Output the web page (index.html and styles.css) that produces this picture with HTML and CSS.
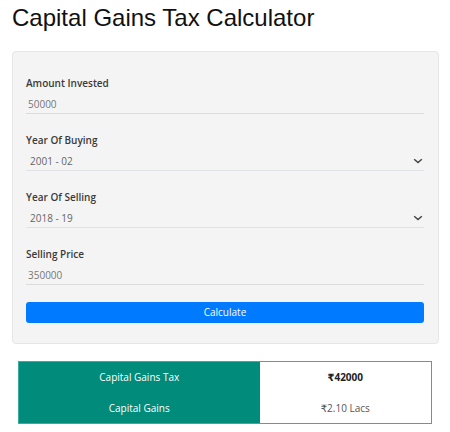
FILE: index.html
```html
<!DOCTYPE html>
<html lang="en">
<head>
<meta charset="utf-8">
<title>Capital Gains Tax Calculator</title>
<link rel="stylesheet" href="styles.css">
</head>
<body>
<h1 class="title">Capital Gains Tax Calculator</h1>
<form class="card">
  <div class="field">
    <label class="label" for="amt">Amount Invested</label>
    <input class="input" id="amt" type="text" value="50000">
  </div>
  <div class="field">
    <label class="label" for="buy">Year Of Buying</label>
    <div class="select-wrap">
      <select class="input select" id="buy"><option>2001 - 02</option></select>
      <svg class="chev" width="10" height="6" viewBox="0 0 10 6"><path d="M1.2 1.2l3.8 3.3 3.8-3.3" fill="none" stroke="#444" stroke-width="1.5"/></svg>
    </div>
  </div>
  <div class="field">
    <label class="label" for="sell">Year Of Selling</label>
    <div class="select-wrap">
      <select class="input select" id="sell"><option>2018 - 19</option></select>
      <svg class="chev" width="10" height="6" viewBox="0 0 10 6"><path d="M1.2 1.2l3.8 3.3 3.8-3.3" fill="none" stroke="#444" stroke-width="1.5"/></svg>
    </div>
  </div>
  <div class="field">
    <label class="label" for="price">Selling Price</label>
    <input class="input" id="price" type="text" value="350000">
  </div>
  <button class="btn" type="button">Calculate</button>
</form>
<table class="result">
  <tr><th>Capital Gains Tax</th><td class="strong">₹42000</td></tr>
  <tr><th>Capital Gains</th><td>₹2.10 Lacs</td></tr>
</table>
</body>
</html>
```

FILE: styles.css
```css
* { box-sizing: border-box; }
html, body { margin: 0; padding: 0; background: #fff; }
body {
  padding: 0 11px 0 12px;
  font-family: "Open Sans", "DejaVu Sans", sans-serif;
  color: #333;
}
.title {
  margin: 0;
  padding-top: 4px;
  height: 51px;
  font-family: "Liberation Sans", Arial, sans-serif;
  font-weight: 400;
  font-size: 24px;
  line-height: 28px;
  color: #111;
}
.card {
  display: flex;
  flex-direction: column;
  background: #f4f4f4;
  border: 1px solid #e6e6e6;
  border-radius: 4px;
  padding: 24px 14px 20px 13px;
}
.field {
  display: flex;
  flex-direction: column;
  margin-bottom: 19px;
}
.field:last-of-type { margin-bottom: 17px; }
.label {
  font-size: 10px;
  line-height: 14px;
  font-weight: 600;
  color: #3a3a3a;
}
.input {
  display: block;
  width: 100%;
  height: 24px;
  margin: 0;
  padding: 8px 2px 3px;
  border: 0;
  border-bottom: 1px solid #dcdcdc;
  border-radius: 0;
  background: transparent;
  font-family: inherit;
  font-size: 10px;
  line-height: 12px;
  color: #777;
  outline: none;
}
.select-wrap { position: relative; }
.select {
  appearance: none;
  -webkit-appearance: none;
  padding-left: 4px;
  color: #666;
  border-bottom-color: #e0e2e5;
}
.chev {
  position: absolute;
  right: 1px;
  top: 11px;
  pointer-events: none;
}
.btn {
  height: 21px;
  padding: 0;
  border: 0;
  border-radius: 3px;
  background: #007bff;
  color: #fff;
  font-family: inherit;
  font-size: 10px;
  line-height: 21px;
}
.result {
  margin: 17px 7px 0 6px;
  width: 414px;
  border-collapse: collapse;
  border: 1px solid #3aada1;
  font-size: 10px;
}
.result th, .result td {
  height: 31px;
  padding: 0;
  text-align: center;
  vertical-align: middle;
}
.result th {
  width: 241px;
  background: #008b7a;
  color: #fff;
  font-weight: 400;
}
.result td {
  background: #fff;
  color: #555;
}
.result td.strong { font-weight: 700; color: #222; }
```
